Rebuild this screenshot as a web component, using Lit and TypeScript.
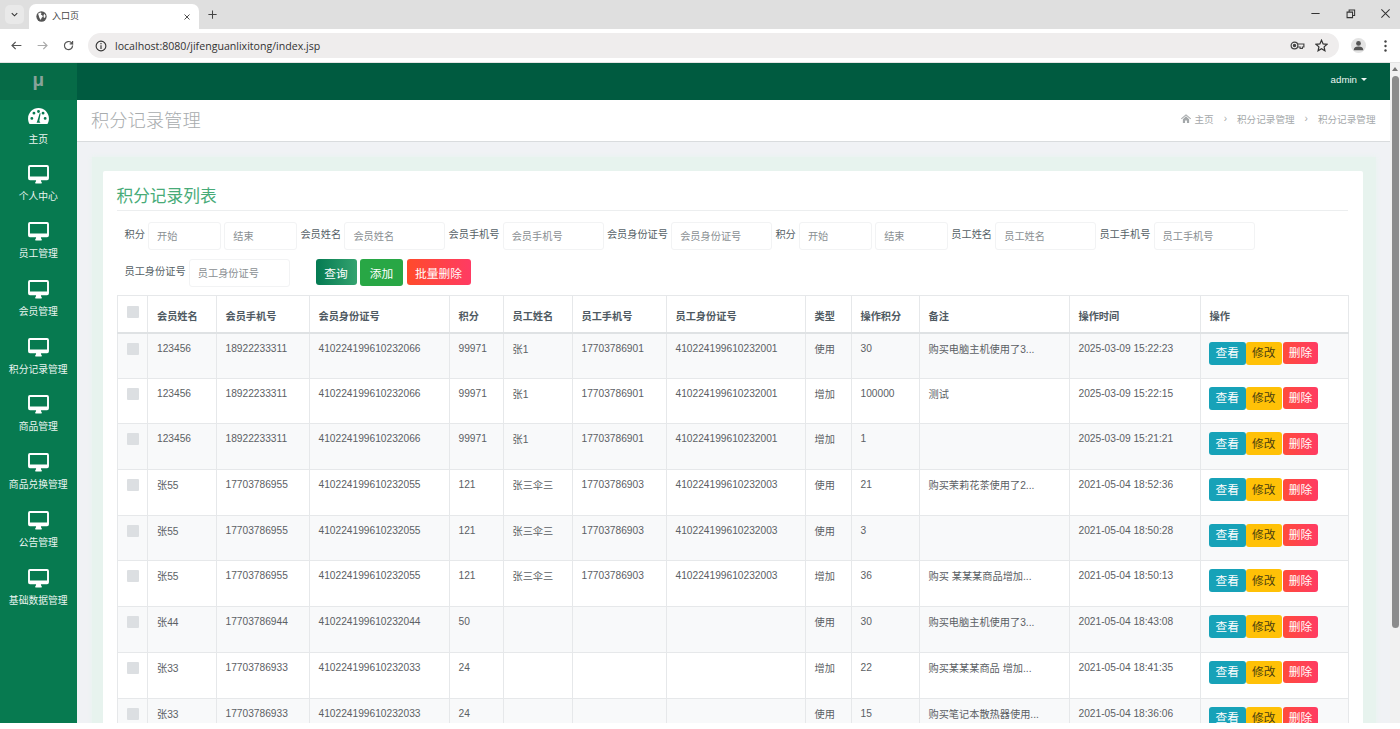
import { LitElement, html, css, svg } from "lit";
import { customElement } from "lit/decorators.js";

const rows = [
  ["123456","18922233311","410224199610232066","99971","张1","17703786901","410224199610232001","使用","30","购买电脑主机使用了3...","2025-03-09 15:22:23"],
  ["123456","18922233311","410224199610232066","99971","张1","17703786901","410224199610232001","增加","100000","测试","2025-03-09 15:22:15"],
  ["123456","18922233311","410224199610232066","99971","张1","17703786901","410224199610232001","增加","1","","2025-03-09 15:21:21"],
  ["张55","17703786955","410224199610232055","121","张三伞三","17703786903","410224199610232003","使用","21","购买茉莉花茶使用了2...","2021-05-04 18:52:36"],
  ["张55","17703786955","410224199610232055","121","张三伞三","17703786903","410224199610232003","使用","3","","2021-05-04 18:50:28"],
  ["张55","17703786955","410224199610232055","121","张三伞三","17703786903","410224199610232003","增加","36","购买 某某某商品增加...","2021-05-04 18:50:13"],
  ["张44","17703786944","410224199610232044","50","","","","使用","30","购买电脑主机使用了3...","2021-05-04 18:43:08"],
  ["张33","17703786933","410224199610232033","24","","","","增加","22","购买某某某商品 增加...","2021-05-04 18:41:35"],
  ["张33","17703786933","410224199610232033","24","","","","使用","15","购买笔记本散热器使用...","2021-05-04 18:36:06"],
];
const heads = ["会员姓名","会员手机号","会员身份证号","积分","员工姓名","员工手机号","员工身份证号","类型","操作积分","备注","操作时间","操作"];
const menu = ["个人中心","员工管理","会员管理","积分记录管理","商品管理","商品兑换管理","公告管理","基础数据管理"];

const desktop = svg`<svg class="mi" viewBox="0 0 22 20"><path fill="currentColor" fill-rule="evenodd" d="M2 0h18a2 2 0 0 1 2 2v12a2 2 0 0 1-2 2h-6.500q0 1.500 1 2.500v.5a.5.5 0 0 1-.5.5H8a.5.5 0 0 1-.5-.5v-.5q1-1 1-2.500H2a2 2 0 0 1-2-2V2a2 2 0 0 1 2-2zM2 2v10h18V2z"/></svg>`;
const gauge = svg`<svg class="mi" viewBox="0 0 22 20"><path fill="currentColor" fill-rule="evenodd" d="M11 1C5 1 0 6 0 12c0 2.200.6 4.300 1.700 6h18.600C21.400 16.300 22 14.200 22 12 22 6 17 1 11 1zM4 13.500a1.500 1.500 0 1 1 0-3 1.500 1.500 0 0 1 0 3zM6.200 8a1.500 1.500 0 1 1 0-3 1.500 1.500 0 0 1 0 3zM11 6.200a1.500 1.500 0 1 1 0-3 1.500 1.500 0 0 1 0 3zM13 16.500h-4l.9-2.200 2.300-7.800 1 .2-1.300 8zM15.800 8a1.500 1.500 0 1 1 0-3 1.500 1.500 0 0 1 0 3zM18 13.500a1.500 1.500 0 1 1 0-3 1.500 1.500 0 0 1 0 3z"/></svg>`;

@customElement("app-root")
export class AppRoot extends LitElement {
  static styles = css`
    :host { display: block; width: 1400px; height: 729px; overflow: hidden; background: #fff;
      font-family: "Liberation Sans", "Noto Sans CJK SC", sans-serif; font-size: 10.2px; color: #5b6064; }
    * { box-sizing: border-box; }
    svg { display: block; }

    .tabs { height: 29px; background: #dfdfdf; display: flex; align-items: flex-end; padding-left: 5px; }
    .tablist { width: 19px; height: 19px; margin-bottom: 5px; border-radius: 5px; background: #e9e9e9; display: flex; align-items: center; justify-content: center; color: #333; }
    .tab { width: 170px; height: 25px; margin-left: 5px; background: #fff; border-radius: 7px 7px 0 0; display: flex; align-items: center; padding: 0 7px; font-family: "Noto Sans CJK SC", sans-serif; font-size: 9px; color: #444; gap: 5px; }
    .tab span { flex: 1; padding-bottom: 3px; }
    .plus { margin: 0 0 5px 8px; color: #444; align-self: flex-end; height: 20px; display: flex; align-items: center; }
    .winbtns { margin-left: auto; display: flex; align-self: flex-start; color: #333; gap: 24px; padding: 8px 9px 0 0; }
    .toolbar { height: 34px; background: #fff; display: flex; align-items: center; padding: 0 0 0 9.500px; color: #555; border-bottom: 1px solid #e4e4e4; }
    .nav { display: flex; gap: 13px; align-items: center; margin-right: 13.500px; }
    .omni { width: 1251px; height: 25px; background: #efeded; border-radius: 13px; display: flex; align-items: center; padding: 0 11px 0 5px; font-family: "Open Sans", sans-serif; font-size: 10.600px; color: #333; gap: 7px; }
    .omni .url { flex: 1; }
    .omni .info { width: 15px; height: 15px; display: flex; align-items: center; justify-content: center; }
    .omni .right { display: flex; gap: 10.500px; align-items: center; }
    .tool-right { display: flex; align-items: center; margin-left: 11.500px; gap: 18px; }
    .avatar { width: 15px; height: 15px; border-radius: 50%; background: #e3e3e3; display: flex; align-items: center; justify-content: center; }

    .view { height: 660px; display: flex; }
    .app { flex: 1; min-width: 0; display: flex; overflow: hidden; }
    .side { width: 76.500px; flex: none; background: #077a50; color: #fff; }
    .logo { height: 37px; background: #066b47; display: flex; align-items: center; justify-content: center; font-size: 19px; font-weight: 700; color: #88a39a; padding-bottom: 4px; }
    .mitem { height: 57.700px; display: flex; flex-direction: column; align-items: center; padding-top: 7px; font-family: "Noto Sans CJK SC", sans-serif; font-size: 9.800px; color: #eaf5f0; }
    .mi { width: 21px; height: 19px; color: #fff; margin-bottom: 5px; }
    .mitem.home .mi { margin-bottom: 6px; }

    .main { flex: 1; min-width: 0; display: flex; flex-direction: column; background: #f0f2f5; }
    .top { height: 37px; flex: none; background: #005b40; display: flex; justify-content: flex-end; align-items: center; padding: 0 23px 4px 0; color: #eef7f3; font-size: 9.700px; gap: 4px; }
    .caret { width: 0; height: 0; border: 3px solid transparent; border-top-color: #eef7f3; border-bottom: 0; }
    .pagehead { height: 42px; flex: none; background: #fff; border-bottom: 1px solid #d9dcde; display: flex; align-items: center; justify-content: space-between; padding: 0 14.500px 4px 14.500px; }
    .pagehead h1 { margin: 0; font-weight: 300; font-size: 18.300px; color: #a8acae; font-family: "Noto Sans CJK SC", sans-serif; }
    .crumb { display: flex; align-items: center; color: #a4a8aa; font-size: 9.600px; gap: 10px; }
    .crumb .home { display: flex; gap: 4px; align-items: center; }
    .crumb i { font-style: normal; font-size: 10px; color: #aaa; }
    .wrap { flex: 1; min-height: 0; overflow: hidden; padding: 15px 14px 0 15px; }
    .panel { background: #e7f3ee; padding: 14px 13.500px 0 11px; height: 700px; box-shadow: 0 0 6px #e7f3ee; }
    .card { background: #fff; padding: 14px 14.500px 0 14px; height: 700px; border-radius: 2px; }
    .card h2 { margin: 0; font-weight: 400; font-size: 16.700px; line-height: 21px; color: #48ab78; padding-bottom: 4px; border-bottom: 1px solid #eceeef; font-family: "Noto Sans CJK SC", sans-serif; }
    .filters { display: flex; flex-direction: column; row-gap: 9px; padding: 11px 0 8px 8px; }
    .frow { display: flex; align-items: center; column-gap: 3.200px; height: 28px; }
    .frow label { color: #555f66; line-height: 24px; margin-bottom: 2px; }
    .frow .inp { height: 28px; background: #fff; border: 1px solid #f2f3f4; border-radius: 3px; padding: 0 8px 1px; display: flex; align-items: center; color: #8a8f93; }
    .inp.s { width: 73px; }
    .inp.l { width: 101px; }
    .btns { display: flex; align-items: center; gap: 3.500px; margin: 0 0 2px 22.500px; font-size: 11.700px; }
    .btn { color: #fff; border-radius: 3px; display: flex; align-items: center; justify-content: center; height: 26px; }
    .b1 { width: 41px; background: linear-gradient(90deg, #047a52, #34a36f); }
    .b2 { width: 43px; height: 27px; background: #28a745; }
    .b3 { width: 64px; background: linear-gradient(90deg, #ff4b2b, #ff3b63); }

    table { table-layout: fixed; border-collapse: collapse; width: 1231px; }
    th, td { border: 1px solid #e6e8ea; padding: 0 9px; text-align: left; vertical-align: top; overflow: hidden; white-space: nowrap; }
    th { height: 37px; vertical-align: middle; font-weight: 700; color: #4f5a62; border-bottom: 2px solid #dfe2e4; padding-top: 3px; }
    td { height: 45.700px; padding-top: 9px; line-height: 12px; }
    td.cjk { padding-top: 10px; }
    tbody tr:nth-child(odd) td { background: #f8f9fa; }
    .cb { width: 12px; height: 12px; background: #dcdfe2; border-radius: 1px; }
    th .cb { margin-top: -6px; }
    .ops { display: flex; margin: -1px 0 0 -0.500px; font-size: 11.700px; }
    .op { height: 23px; width: 36.500px; border-radius: 3px; display: flex; align-items: center; justify-content: center; color: #fff; }
    .v { background: #17a2b8; }
    .e { background: #ffc107; color: #4a3d10; }
    .d { background: linear-gradient(90deg, #ff4b3b, #ff3b63); width: 35px; height: 22px; margin: 0.500px 0 0 1px; }

    .sbar { width: 10px; flex: none; background: #f1f1f1; display: flex; flex-direction: column; align-items: center; padding-top: 4px; }
    .sbar .up { width: 0; height: 0; border: 3px solid transparent; border-bottom: 4px solid #777; border-top: 0; }
    .sbar .thumb { width: 7px; height: 552px; margin-top: 5px; background: #8c8c8c; border-radius: 4px; }
  `;

  private icon(d: string, w = 13, h = 13, vb = "0 0 16 16") {
    return svg`<svg width=${w} height=${h} viewBox=${vb} fill="none" stroke="currentColor" stroke-width="1.500"><path d=${d}/></svg>`;
  }

  render() {
    const colW = [30.5, 68.5, 93, 140, 54, 69, 94, 139, 46, 68, 150, 131, 148];
    return html`
      <div class="tabs">
        <div class="tablist">${this.icon("M4 6l4 4 4-4", 11, 11)}</div>
        <div class="tab">
          <svg width="11" height="11" viewBox="0 0 16 16"><circle cx="8" cy="8" r="7.500" fill="#555"/><path fill="#fff" d="M3 4l3-2 2 1-1 2 2 1 1 2-2 2-1 3-2-3-1-3zM12 4l2 3-1 3-2-1 0-3z"/></svg>
          <span>入口页</span>
          ${this.icon("M4 4l8 8M12 4l-8 8", 10, 10, "0 0 16 16")}
        </div>
        <div class="plus">${this.icon("M8 2v12M2 8h12", 11, 11)}</div>
        <div class="winbtns">
          ${this.icon("M2 8h12", 11, 11)}
          ${this.icon("M3 6h8v8H3zM6 6V3h8v8h-3", 11, 11)}
          ${this.icon("M2 2l12 12M14 2L2 14", 11, 11)}
        </div>
      </div>
      <div class="toolbar">
        <div class="nav">
          ${this.icon("M14 8H3M7 3.500L2.500 8 7 12.500", 13, 13)}
          <span style="color:#aaa">${this.icon("M2 8h11M9 3.500L13.500 8 9 12.500", 13, 13)}</span>
          ${this.icon("M13 8a5 5 0 1 1-1.500-3.500L13 6V2.500M13 6H9.500", 13, 13)}
        </div>
        <div class="omni">
          <div class="info">
            <svg width="12" height="12" viewBox="0 0 16 16" fill="none" stroke="#333" stroke-width="1.500"><circle cx="8" cy="8" r="6.500"/><path d="M8 7v5M8 4v1.500"/></svg>
          </div>
          <div class="url">localhost:8080/jifenguanlixitong/index.jsp</div>
          <div class="right">
            <svg width="15" height="11" viewBox="0 0 20 14" fill="none" stroke="#444" stroke-width="1.600"><circle cx="6" cy="7" r="4.500"/><circle cx="6" cy="7" r="1.500" fill="#444"/><path d="M10.500 5h8v4h-2v2h-3V9h-3"/></svg>
            <svg width="13" height="13" viewBox="0 0 16 16" fill="none" stroke="#333" stroke-width="1.500"><path d="M8 1.500l2 4.500 4.800.5-3.600 3.200 1 4.800L8 12l-4.200 2.500 1-4.800L1.200 6.500 6 6z"/></svg>
          </div>
        </div>
        <div class="tool-right">
          <div class="avatar"><svg width="11" height="11" viewBox="0 0 16 16" fill="#555"><circle cx="8" cy="5" r="3.500"/><path d="M1 15c0-4 3-5.500 7-5.500s7 1.500 7 5.500z"/></svg></div>
          <svg width="3" height="12" viewBox="0 0 3 12" fill="#444"><circle cx="1.500" cy="1.500" r="1.200"/><circle cx="1.500" cy="6" r="1.200"/><circle cx="1.500" cy="10.500" r="1.200"/></svg>
        </div>
      </div>
      <div class="view">
        <div class="app">
          <nav class="side">
            <div class="logo">μ</div>
            <div class="mitem home">${gauge}<span>主页</span></div>
            ${menu.map((m) => html`<div class="mitem">${desktop}<span>${m}</span></div>`)}
          </nav>
          <div class="main">
            <div class="top"><span>admin</span><span class="caret"></span></div>
            <div class="pagehead">
              <h1>积分记录管理</h1>
              <div class="crumb">
                <span class="home">
                  <svg width="10" height="9" viewBox="0 0 16 14" fill="#a4a8aa"><path d="M8 0l8 7-1 1-7-6-7 6-1-1zM3 8l5-4.500L13 8v6H9.500v-4h-3v4H3z"/></svg>
                  主页
                </span>
                <i>›</i><span>积分记录管理</span><i>›</i><span>积分记录管理</span>
              </div>
            </div>
            <div class="wrap">
              <div class="panel">
                <div class="card">
                  <h2>积分记录列表</h2>
                  <div class="filters">
                    <div class="frow">
                      <label>积分</label><div class="inp s">开始</div><div class="inp s">结束</div>
                      <label>会员姓名</label><div class="inp l">会员姓名</div>
                      <label>会员手机号</label><div class="inp l">会员手机号</div>
                      <label>会员身份证号</label><div class="inp l">会员身份证号</div>
                      <label>积分</label><div class="inp s">开始</div><div class="inp s">结束</div>
                      <label>员工姓名</label><div class="inp l">员工姓名</div>
                      <label>员工手机号</label><div class="inp l">员工手机号</div>
                    </div>
                    <div class="frow">
                      <label>员工身份证号</label><div class="inp l">员工身份证号</div>
                      <div class="btns">
                        <div class="btn b1">查询</div><div class="btn b2">添加</div><div class="btn b3">批量删除</div>
                      </div>
                    </div>
                  </div>
                  <table>
                    <colgroup>${colW.map((w) => html`<col style="width:${w}px">`)}</colgroup>
                    <thead><tr><th><div class="cb"></div></th>${heads.map((h) => html`<th>${h}</th>`)}</tr></thead>
                    <tbody>
                      ${rows.map((r) => html`<tr>
                        <td><div class="cb"></div></td>
                        ${r.map((c) => html`<td class=${/[^\x00-\x7f]/.test(c) ? "cjk" : ""}>${c}</td>`)}
                        <td><div class="ops"><div class="op v">查看</div><div class="op e">修改</div><div class="op d">删除</div></div></td>
                      </tr>`)}
                    </tbody>
                  </table>
                </div>
              </div>
            </div>
          </div>
        </div>
        <div class="sbar"><div class="up"></div><div class="thumb"></div></div>
      </div>
    `;
  }
}
